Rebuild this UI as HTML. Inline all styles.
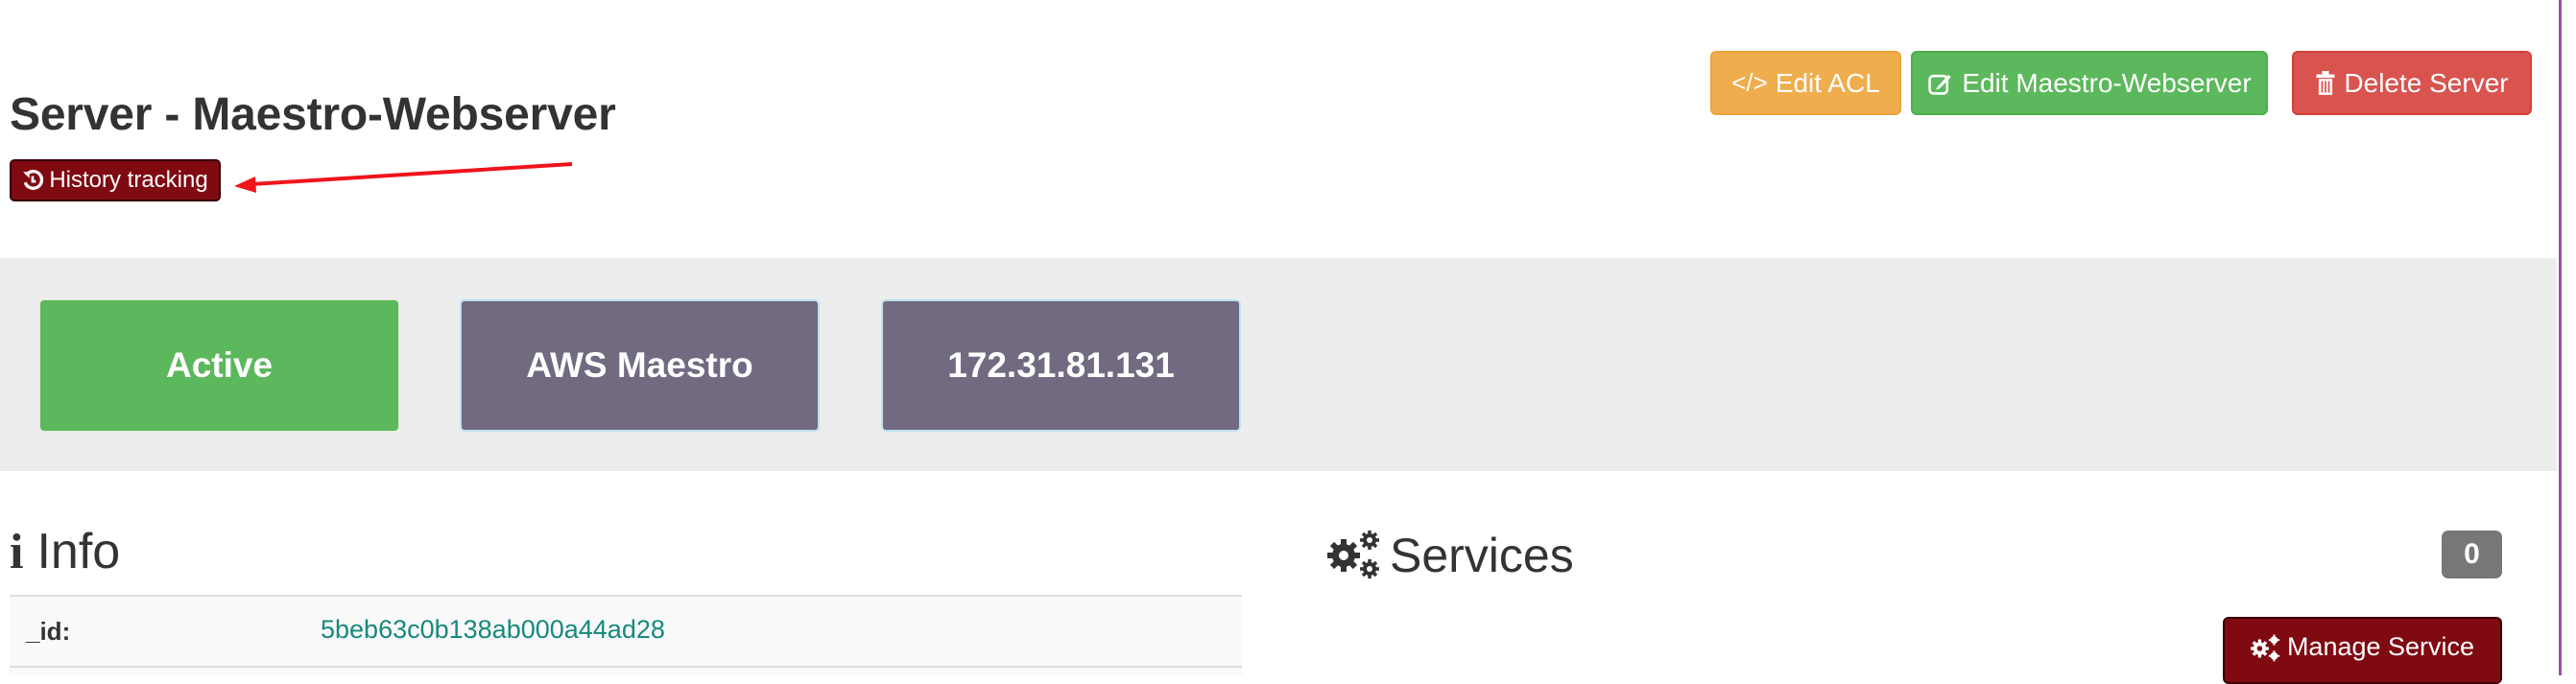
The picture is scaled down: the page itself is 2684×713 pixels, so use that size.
<!DOCTYPE html>
<html><head><meta charset="utf-8"><style>
*{box-sizing:border-box;margin:0;padding:0}
body{width:2684px;height:704px;background:#fff;position:relative;overflow:hidden;font-family:"Liberation Sans",Arial,sans-serif;color:#333}
.a{position:absolute}
.btn{position:absolute;color:#fff;border-radius:6px;display:flex;align-items:center;justify-content:center;font-size:28px;white-space:nowrap}
.box{position:absolute;top:312px;height:138px;width:375px;border-radius:5px;color:#fff;font-weight:bold;font-size:37px;display:flex;align-items:center;justify-content:center}
</style></head><body>
<div class="a" style="left:2666px;top:0;width:3px;height:704px;background:#9b4fa8"></div>

<div class="a" style="left:10px;top:92px;font-size:48px;font-weight:bold;letter-spacing:-0.2px;color:#333">Server - Maestro-Webserver</div>

<div class="btn" style="left:10px;top:166px;width:220px;height:44px;background:#7f0a12;border:2px solid #3a0005;border-radius:5px;font-size:24px">
<svg width="22" height="22" viewBox="0 0 20 20" style="margin-right:6px"><path d="M4 5 A8 8 0 1 1 3 12" fill="none" stroke="#fff" stroke-width="3"/><path d="M1 2 L7 2 L7 8 Z" fill="#fff"/><path d="M10 6 V11 H13" fill="none" stroke="#fff" stroke-width="2.5"/></svg>History tracking</div>

<svg class="a" style="left:0;top:0" width="700" height="230"><line x1="596" y1="171" x2="262" y2="192" stroke="#f0141b" stroke-width="4"/><path d="M244 194 L266 184 L267 201 Z" fill="#f0141b"/></svg>

<div class="btn" style="left:1782px;top:53px;width:199px;height:67px;background:#efad4d;border:2px solid #eea236"><span style="margin-right:8px;font-size:26px">&lt;/&gt;</span>Edit ACL</div>
<div class="btn" style="left:1991px;top:53px;width:372px;height:67px;background:#5cb85c;border:2px solid #4cae4c">
<svg width="26" height="26" viewBox="0 0 20 20" style="margin-right:10px"><rect x="2" y="4" width="14" height="14" rx="3" fill="none" stroke="#fff" stroke-width="2"/><path d="M8 13 L17 3 L19 5 L10 14 L7 15 Z" fill="#fff"/></svg>Edit Maestro-Webserver</div>
<div class="btn" style="left:2388px;top:53px;width:250px;height:67px;background:#d9534f;border:2px solid #d43f3a">
<svg width="22" height="26" viewBox="0 0 18 22" style="margin-right:8px"><rect x="1" y="3" width="16" height="3" fill="#fff"/><rect x="6" y="0" width="6" height="3" fill="#fff"/><path d="M3 7 H15 V21 H3 Z" fill="#fff"/><path d="M6 9 V19 M9 9 V19 M12 9 V19" stroke="#d9534f" stroke-width="1.5"/></svg>Delete Server</div>

<div class="a" style="left:0;top:269px;width:2664px;height:222px;background:#ededed"></div>
<div class="box" style="left:41px;background:#5cb85c;border:1px solid #e0eed8">Active</div>
<div class="box" style="left:479px;background:#716a80;border:2px solid #bfe0ee">AWS Maestro</div>
<div class="box" style="left:918px;background:#716a80;border:2px solid #bfe0ee">172.31.81.131</div>

<div class="a" style="left:10px;top:545px;font-size:52px;color:#333"><span style="font-family:'Liberation Serif',serif;font-weight:bold;margin-right:14px">i</span>Info</div>
<div class="a" style="left:10px;top:620px;width:1284px;height:84px;background:#f9f9f9;border-top:2px solid #ddd"></div>
<div class="a" style="left:27px;top:643px;font-size:26px;font-weight:bold;color:#333">_id:</div>
<div class="a" style="left:334px;top:641px;font-size:27px;color:#16897c">5beb63c0b138ab000a44ad28</div>
<div class="a" style="left:10px;top:694px;width:1284px;height:2px;background:#ddd"></div>

<svg class="a" style="left:1383px;top:553px" width="54" height="52" viewBox="0 0 54 52">
<g fill="#333"><circle cx="17" cy="26" r="12"/><g stroke="#333" stroke-width="6"><path d="M17 9 V43 M0 26 H34 M5 14 L29 38 M29 14 L5 38"/></g><circle cx="17" cy="26" r="5" fill="#fff"/>
<circle cx="44" cy="10" r="7"/><path d="M44 0 V20 M34 10 H54 M37 3 L51 17 M51 3 L37 17" stroke="#333" stroke-width="3.5"/><circle cx="44" cy="10" r="3" fill="#fff"/>
<circle cx="44" cy="40" r="7"/><path d="M44 30 V50 M34 40 H54 M37 33 L51 47 M51 33 L37 47" stroke="#333" stroke-width="3.5"/><circle cx="44" cy="40" r="3" fill="#fff"/></g></svg>
<div class="a" style="left:1448px;top:550px;font-size:50px;color:#333">Services</div>
<div class="btn" style="left:2544px;top:553px;width:63px;height:50px;background:#777;font-weight:bold;font-size:30px;border-radius:7px">0</div>
<div class="btn" style="left:2316px;top:643px;width:291px;height:70px;background:#7f0a12;border:2px solid #3a0005;font-size:27px;align-items:flex-start;padding-top:14px">
<svg width="30" height="30" viewBox="0 0 54 52" style="margin-right:8px;margin-top:2px"><g fill="#fff"><circle cx="17" cy="26" r="12"/><path d="M17 9 V43 M0 26 H34 M5 14 L29 38 M29 14 L5 38" stroke="#fff" stroke-width="6"/><circle cx="17" cy="26" r="5" fill="#7f0a12"/><circle cx="44" cy="10" r="7"/><path d="M44 0 V20 M34 10 H54" stroke="#fff" stroke-width="3.5"/><circle cx="44" cy="40" r="7"/><path d="M44 30 V50 M34 40 H54" stroke="#fff" stroke-width="3.5"/></g></svg>Manage Service</div>
</body></html>
